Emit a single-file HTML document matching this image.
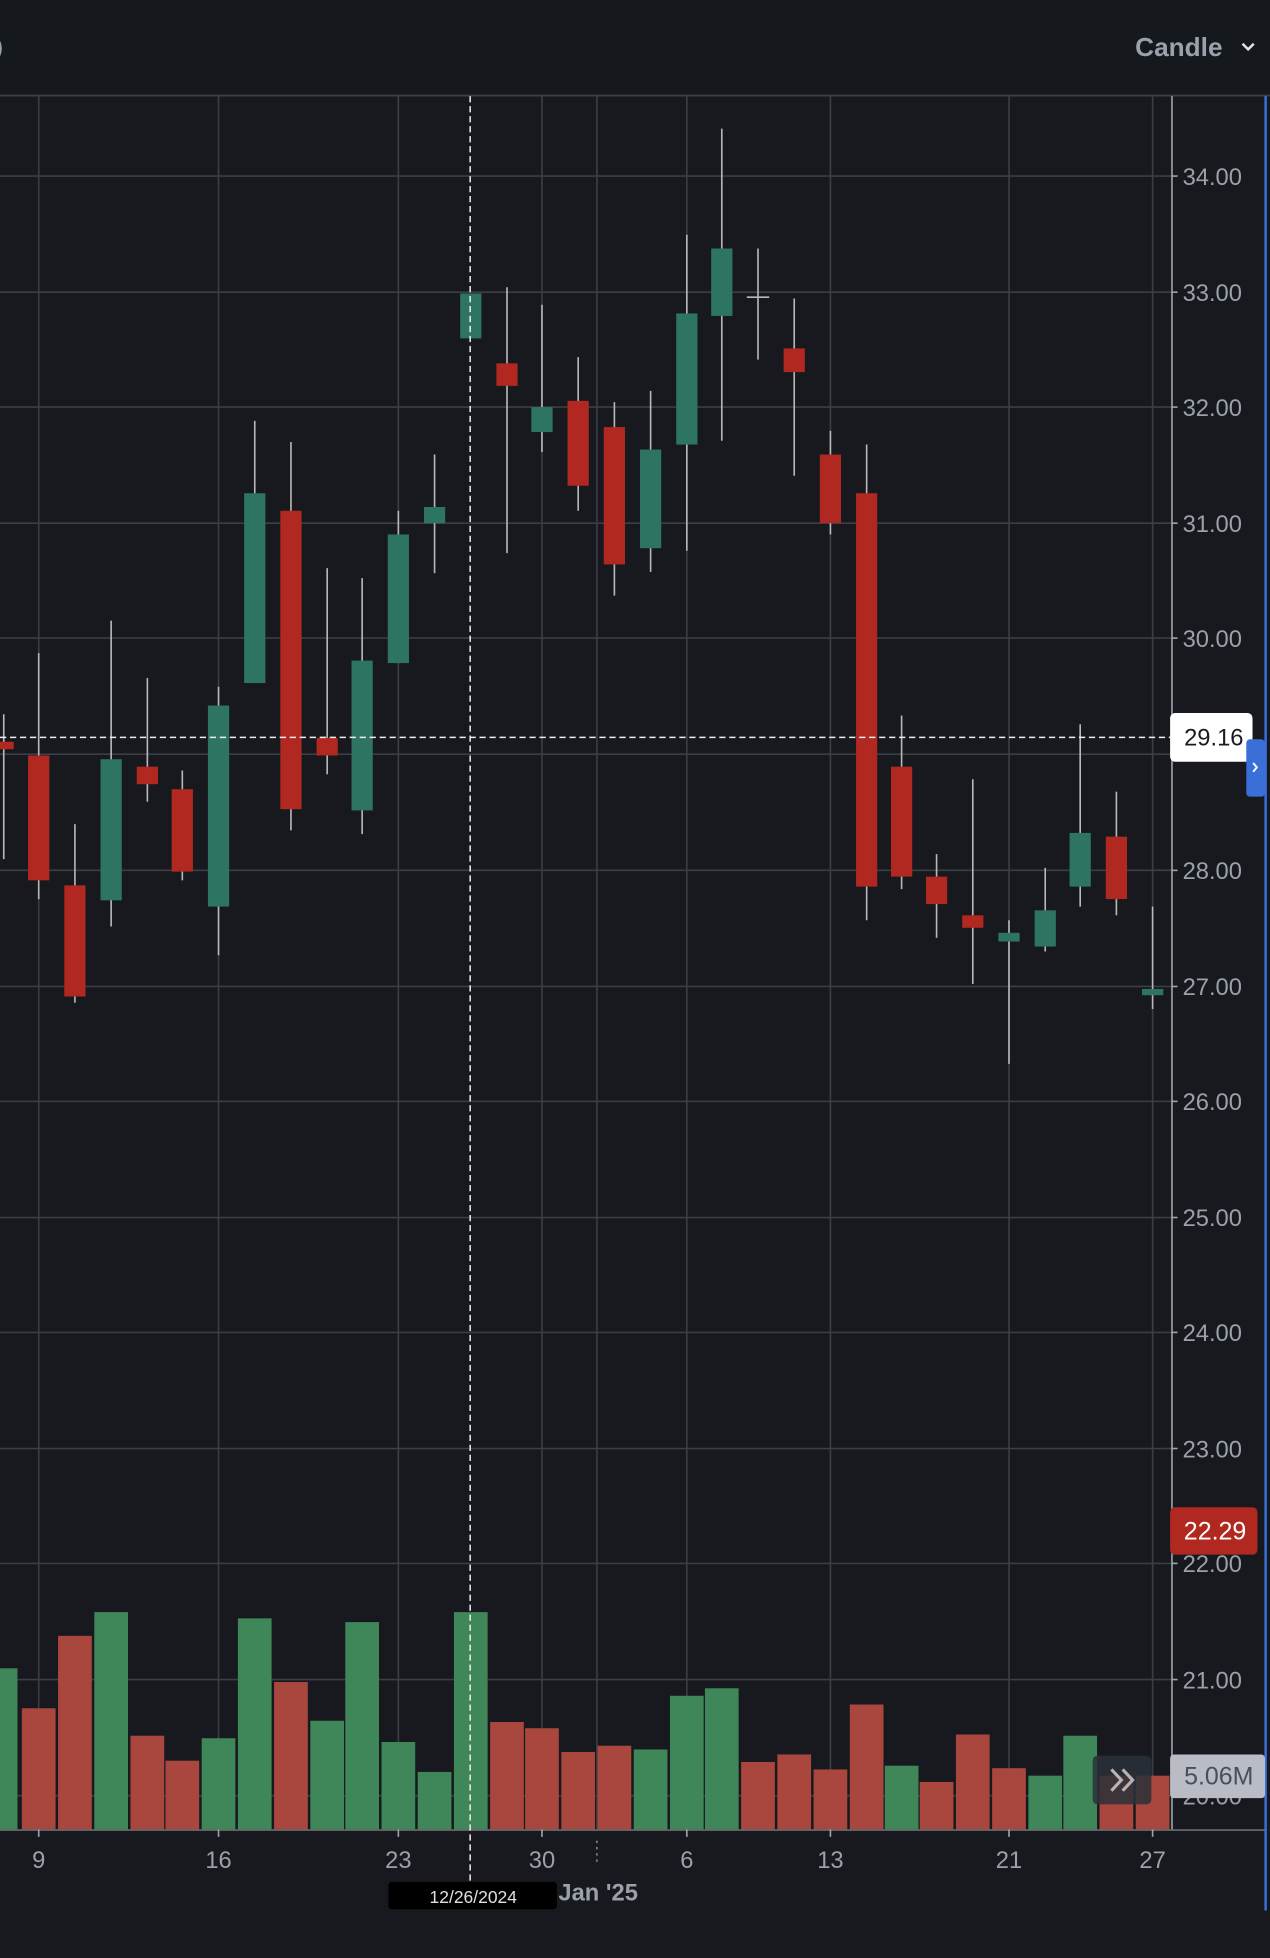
<!DOCTYPE html>
<html><head><meta charset="utf-8"><style>
html,body{margin:0;padding:0;background:#17191e;}
svg{display:block}
text{font-family:"Liberation Sans",sans-serif}
</style></head><body>
<svg width="1270" height="1958" viewBox="0 0 1017 1568" preserveAspectRatio="none" xmlns="http://www.w3.org/2000/svg">
<rect width="1017" height="1568" fill="#17191e"/>
<rect width="1017" height="76" fill="#15181c"/>
<line x1="0" y1="76.5" x2="1017" y2="76.5" stroke="#3b3e44" stroke-width="1.5"/>
<text x="-4" y="44" fill="#9aa1ab" font-size="20">)</text>
<text x="909" y="45" fill="#9aa1ab" font-size="21" font-weight="bold">Candle</text>
<path d="M995 35 L999.5 39.5 L1004 35" stroke="#e0e3e8" stroke-width="2" fill="none"/>
<g stroke="#3b3e44" stroke-width="1.3">
<line x1="0" y1="141" x2="938" y2="141"/><line x1="0" y1="234" x2="938" y2="234"/><line x1="0" y1="326" x2="938" y2="326"/><line x1="0" y1="419" x2="938" y2="419"/><line x1="0" y1="511" x2="938" y2="511"/><line x1="0" y1="604" x2="938" y2="604"/><line x1="0" y1="697" x2="938" y2="697"/><line x1="0" y1="790" x2="938" y2="790"/><line x1="0" y1="882" x2="938" y2="882"/><line x1="0" y1="975" x2="938" y2="975"/><line x1="0" y1="1067" x2="938" y2="1067"/><line x1="0" y1="1160" x2="938" y2="1160"/><line x1="0" y1="1252" x2="938" y2="1252"/><line x1="0" y1="1345" x2="938" y2="1345"/><line x1="0" y1="1438" x2="938" y2="1438"/>
<line x1="31" y1="77" x2="31" y2="1465"/><line x1="175" y1="77" x2="175" y2="1465"/><line x1="319" y1="77" x2="319" y2="1465"/><line x1="434" y1="77" x2="434" y2="1465"/><line x1="478" y1="77" x2="478" y2="1465"/><line x1="550" y1="77" x2="550" y2="1465"/><line x1="665" y1="77" x2="665" y2="1465"/><line x1="808" y1="77" x2="808" y2="1465"/><line x1="923" y1="77" x2="923" y2="1465"/>
</g>
<g>
<rect x="0" y="1336" width="14" height="129" fill="#3f8658"/>
<rect x="17.5" y="1368" width="27" height="97" fill="#a9473f"/>
<rect x="46.5" y="1310" width="27" height="155" fill="#a9473f"/>
<rect x="75.5" y="1291" width="27" height="174" fill="#3f8658"/>
<rect x="104.5" y="1390" width="27" height="75" fill="#a9473f"/>
<rect x="132.5" y="1410" width="27" height="55" fill="#a9473f"/>
<rect x="161.5" y="1392" width="27" height="73" fill="#3f8658"/>
<rect x="190.5" y="1296" width="27" height="169" fill="#3f8658"/>
<rect x="219.5" y="1347" width="27" height="118" fill="#a9473f"/>
<rect x="248.5" y="1378" width="27" height="87" fill="#3f8658"/>
<rect x="276.5" y="1299" width="27" height="166" fill="#3f8658"/>
<rect x="305.5" y="1395" width="27" height="70" fill="#3f8658"/>
<rect x="334.5" y="1419" width="27" height="46" fill="#3f8658"/>
<rect x="363.5" y="1291" width="27" height="174" fill="#3f8658"/>
<rect x="392.5" y="1379" width="27" height="86" fill="#a9473f"/>
<rect x="420.5" y="1384" width="27" height="81" fill="#a9473f"/>
<rect x="449.5" y="1403" width="27" height="62" fill="#a9473f"/>
<rect x="478.5" y="1398" width="27" height="67" fill="#a9473f"/>
<rect x="507.5" y="1401" width="27" height="64" fill="#3f8658"/>
<rect x="536.5" y="1358" width="27" height="107" fill="#3f8658"/>
<rect x="564.5" y="1352" width="27" height="113" fill="#3f8658"/>
<rect x="593.5" y="1411" width="27" height="54" fill="#a9473f"/>
<rect x="622.5" y="1405" width="27" height="60" fill="#a9473f"/>
<rect x="651.5" y="1417" width="27" height="48" fill="#a9473f"/>
<rect x="680.5" y="1365" width="27" height="100" fill="#a9473f"/>
<rect x="708.5" y="1414" width="27" height="51" fill="#3f8658"/>
<rect x="736.5" y="1427" width="27" height="38" fill="#a9473f"/>
<rect x="765.5" y="1389" width="27" height="76" fill="#a9473f"/>
<rect x="794.5" y="1416" width="27" height="49" fill="#a9473f"/>
<rect x="823.5" y="1422" width="27" height="43" fill="#3f8658"/>
<rect x="851.5" y="1390" width="27" height="75" fill="#3f8658"/>
<rect x="880.5" y="1422" width="27" height="43" fill="#a9473f"/>
<rect x="909.5" y="1422" width="27" height="43" fill="#a9473f"/>
</g>
<g stroke="#b8b8b8" stroke-width="1.3">
<line x1="3" y1="572" x2="3" y2="688"/><line x1="31" y1="523" x2="31" y2="720"/><line x1="60" y1="660" x2="60" y2="803"/><line x1="89" y1="497" x2="89" y2="742"/><line x1="118" y1="543" x2="118" y2="642"/><line x1="146" y1="617" x2="146" y2="705"/><line x1="175" y1="550" x2="175" y2="765"/><line x1="204" y1="337" x2="204" y2="547"/><line x1="233" y1="354" x2="233" y2="665"/><line x1="262" y1="455" x2="262" y2="620"/><line x1="290" y1="463" x2="290" y2="668"/><line x1="319" y1="409" x2="319" y2="531"/><line x1="348" y1="364" x2="348" y2="459"/><line x1="406" y1="230" x2="406" y2="443"/><line x1="434" y1="244" x2="434" y2="362"/><line x1="463" y1="286" x2="463" y2="409"/><line x1="492" y1="322" x2="492" y2="477"/><line x1="521" y1="313" x2="521" y2="458"/><line x1="550" y1="188" x2="550" y2="441"/><line x1="578" y1="103" x2="578" y2="353"/><line x1="607" y1="199" x2="607" y2="288"/><line x1="636" y1="239" x2="636" y2="381"/><line x1="665" y1="345" x2="665" y2="428"/><line x1="694" y1="356" x2="694" y2="737"/><line x1="722" y1="573" x2="722" y2="712"/><line x1="750" y1="684" x2="750" y2="751"/><line x1="779" y1="624" x2="779" y2="788"/><line x1="808" y1="737" x2="808" y2="852"/><line x1="837" y1="695" x2="837" y2="762"/><line x1="865" y1="580" x2="865" y2="726"/><line x1="894" y1="634" x2="894" y2="733"/><line x1="923" y1="726" x2="923" y2="808"/>
<line x1="598" y1="238" x2="616" y2="238"/>
</g>
<g>
<rect x="-5" y="594" width="16" height="6" fill="#b0281f"/>
<rect x="22.5" y="605" width="17" height="100" fill="#b0281f"/>
<rect x="51.5" y="709" width="17" height="89" fill="#b0281f"/>
<rect x="80.5" y="608" width="17" height="113" fill="#2e7463"/>
<rect x="109.5" y="614" width="17" height="14" fill="#b0281f"/>
<rect x="137.5" y="632" width="17" height="66" fill="#b0281f"/>
<rect x="166.5" y="565" width="17" height="161" fill="#2e7463"/>
<rect x="195.5" y="395" width="17" height="152" fill="#2e7463"/>
<rect x="224.5" y="409" width="17" height="239" fill="#b0281f"/>
<rect x="253.5" y="591" width="17" height="14" fill="#b0281f"/>
<rect x="281.5" y="529" width="17" height="120" fill="#2e7463"/>
<rect x="310.5" y="428" width="17" height="103" fill="#2e7463"/>
<rect x="339.5" y="406" width="17" height="13" fill="#2e7463"/>
<rect x="368.5" y="235" width="17" height="36" fill="#2e7463"/>
<rect x="397.5" y="291" width="17" height="18" fill="#b0281f"/>
<rect x="425.5" y="326" width="17" height="20" fill="#2e7463"/>
<rect x="454.5" y="321" width="17" height="68" fill="#b0281f"/>
<rect x="483.5" y="342" width="17" height="110" fill="#b0281f"/>
<rect x="512.5" y="360" width="17" height="79" fill="#2e7463"/>
<rect x="541.5" y="251" width="17" height="105" fill="#2e7463"/>
<rect x="569.5" y="199" width="17" height="54" fill="#2e7463"/>
<rect x="627.5" y="279" width="17" height="19" fill="#b0281f"/>
<rect x="656.5" y="364" width="17" height="55" fill="#b0281f"/>
<rect x="685.5" y="395" width="17" height="315" fill="#b0281f"/>
<rect x="713.5" y="614" width="17" height="88" fill="#b0281f"/>
<rect x="741.5" y="702" width="17" height="22" fill="#b0281f"/>
<rect x="770.5" y="733" width="17" height="10" fill="#b0281f"/>
<rect x="799.5" y="747" width="17" height="7" fill="#2e7463"/>
<rect x="828.5" y="729" width="17" height="29" fill="#2e7463"/>
<rect x="856.5" y="667" width="17" height="43" fill="#2e7463"/>
<rect x="885.5" y="670" width="17" height="50" fill="#b0281f"/>
<rect x="914.5" y="792" width="17" height="5" fill="#2e7463"/>
</g>
<line x1="938.5" y1="77" x2="938.5" y2="1465" stroke="#9ea3ab" stroke-width="1.3"/>
<line x1="0" y1="1465.5" x2="1013" y2="1465.5" stroke="#6a6d72" stroke-width="1.3"/>
<line x1="1013.5" y1="77" x2="1013.5" y2="1530" stroke="#3a6fd8" stroke-width="2"/>
<g stroke="#9ea3ab" stroke-width="1.3">
<line x1="938" y1="141" x2="943" y2="141"/><line x1="938" y1="234" x2="943" y2="234"/><line x1="938" y1="326" x2="943" y2="326"/><line x1="938" y1="419" x2="943" y2="419"/><line x1="938" y1="511" x2="943" y2="511"/><line x1="938" y1="697" x2="943" y2="697"/><line x1="938" y1="790" x2="943" y2="790"/><line x1="938" y1="882" x2="943" y2="882"/><line x1="938" y1="975" x2="943" y2="975"/><line x1="938" y1="1067" x2="943" y2="1067"/><line x1="938" y1="1160" x2="943" y2="1160"/><line x1="938" y1="1252" x2="943" y2="1252"/><line x1="938" y1="1345" x2="943" y2="1345"/>
<line x1="31" y1="1465" x2="31" y2="1471"/><line x1="175" y1="1465" x2="175" y2="1471"/><line x1="319" y1="1465" x2="319" y2="1471"/><line x1="434" y1="1465" x2="434" y2="1471"/><line x1="550" y1="1465" x2="550" y2="1471"/><line x1="665" y1="1465" x2="665" y2="1471"/><line x1="808" y1="1465" x2="808" y2="1471"/><line x1="923" y1="1465" x2="923" y2="1471"/>
</g>
<g fill="#9aa1ab" font-size="19">
<text x="947" y="148">34.00</text><text x="947" y="241">33.00</text><text x="947" y="333">32.00</text><text x="947" y="426">31.00</text><text x="947" y="518">30.00</text><text x="947" y="704">28.00</text><text x="947" y="797">27.00</text><text x="947" y="889">26.00</text><text x="947" y="982">25.00</text><text x="947" y="1074">24.00</text><text x="947" y="1167">23.00</text><text x="947" y="1259">22.00</text><text x="947" y="1352">21.00</text><text x="947" y="1445">20.00</text>
</g>
<g fill="#9aa1ab" font-size="19" text-anchor="middle">
<text x="31" y="1496">9</text><text x="175" y="1496">16</text><text x="319" y="1496">23</text><text x="434" y="1496">30</text><text x="550" y="1496">6</text><text x="665" y="1496">13</text><text x="808" y="1496">21</text><text x="923" y="1496">27</text>
<text x="479" y="1522" font-weight="bold">Jan '25</text>
</g>
<line x1="478" y1="1474" x2="478" y2="1494" stroke="#9aa1ab" stroke-width="1" stroke-dasharray="2 3"/>
<line x1="376.5" y1="77" x2="376.5" y2="1510" stroke="#eeeeee" stroke-width="1.2" stroke-dasharray="5 3"/>
<line x1="0" y1="590.5" x2="938" y2="590.5" stroke="#eeeeee" stroke-width="1.2" stroke-dasharray="5 3"/>
<rect x="937" y="571" width="66" height="39" rx="4" fill="#ffffff"/>
<text x="972" y="597" fill="#1a1c20" font-size="19" text-anchor="middle">29.16</text>
<rect x="998" y="592" width="15" height="46" rx="3" fill="#3a6fd8"/>
<path d="M1003.5 611 L1006.5 614.5 L1003.5 618" stroke="#fff" stroke-width="1.5" fill="none"/>
<rect x="311" y="1507" width="135" height="22" rx="3" fill="#000"/>
<text x="379" y="1524" fill="#e0e0e0" font-size="14" text-anchor="middle">12/26/2024</text>
<rect x="937" y="1207" width="70" height="38" rx="4" fill="#b0281f"/>
<text x="973" y="1233" fill="#ffffff" font-size="20" text-anchor="middle">22.29</text>
<rect x="937" y="1405" width="76" height="35" rx="3" fill="#b9bcc4"/>
<text x="976" y="1429" fill="#4a4e56" font-size="20" text-anchor="middle">5.06M</text>
<rect x="875" y="1406" width="47" height="39" rx="4" fill="#2a3138" fill-opacity="0.85"/>
<path d="M890 1417 L898 1425.5 L890 1434 M899 1417 L907 1425.5 L899 1434" stroke="#b8b4b2" stroke-width="2.5" fill="none"/>
</svg>
</body></html>
